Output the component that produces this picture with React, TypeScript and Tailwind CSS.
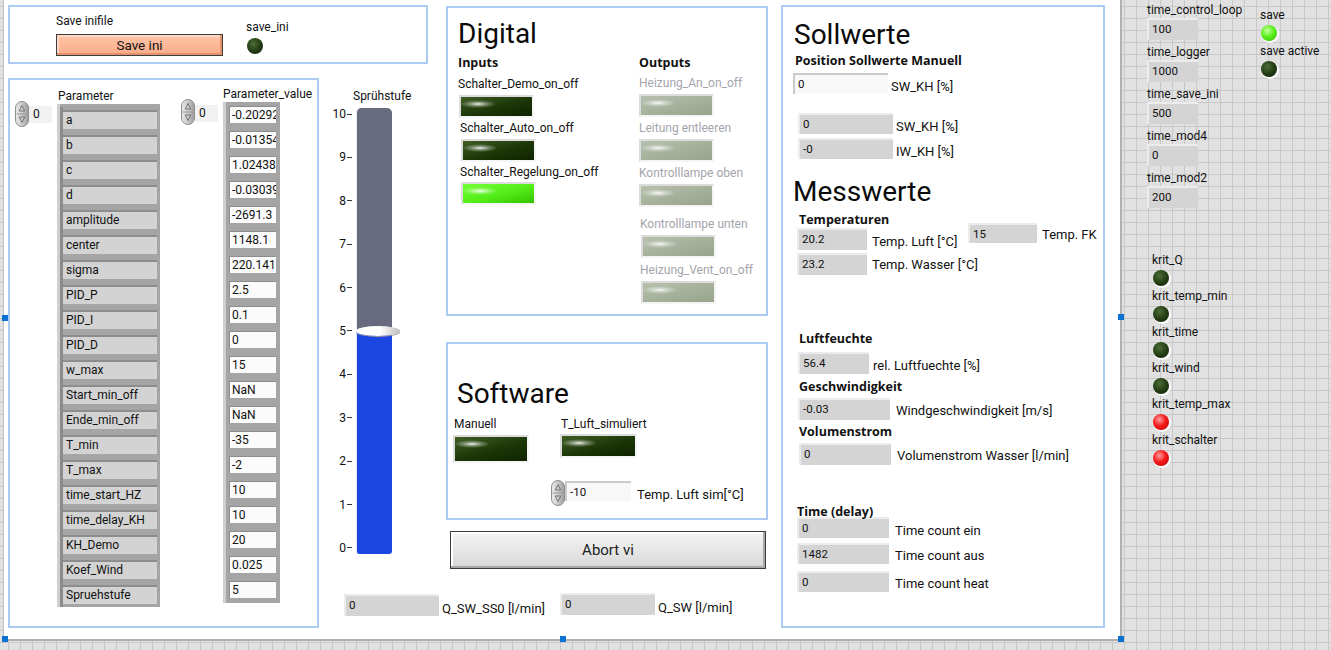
import React from 'react';

type Tone = 'dark' | 'bright' | 'gray';

const rectTone: Record<Tone, string> = {
  dark: 'bg-[image:radial-gradient(ellipse_18px_4px_at_17px_7px,rgba(255,255,255,0.9),rgba(255,255,255,0.35)_50%,rgba(255,255,255,0)),linear-gradient(165deg,#3f5e25,#1c3607_55%,#0e2300)]',
  bright:
    'bg-[image:radial-gradient(ellipse_18px_4px_at_17px_7px,rgba(255,255,255,0.9),rgba(255,255,255,0.35)_50%,rgba(255,255,255,0)),linear-gradient(165deg,#74ff36,#52ec18_55%,#36c200)]',
  gray: 'bg-[image:radial-gradient(ellipse_18px_4px_at_17px_7px,rgba(255,255,255,0.9),rgba(255,255,255,0.35)_50%,rgba(255,255,255,0)),linear-gradient(165deg,#b6c0ae,#a5b09a_55%,#97a38b)]',
};

const roundTone = {
  dark: 'bg-[image:radial-gradient(circle_at_40%_35%,#4d6d37,#203a12_55%,#112307)]',
  bright: 'bg-[image:radial-gradient(circle_at_40%_35%,#c4ff9e,#5cf01e_45%,#2fb800)]',
  red: 'bg-[image:radial-gradient(circle_at_40%_35%,#ffa0a0,#f41a1a_45%,#bf0000)]',
};

const BOLD = "font-['Open_Sans',sans-serif] text-[12.5px] font-bold leading-[16px]";
const HEAD = 'text-[28px] leading-[32px] text-[#0a0a0a]';

const RectLed = ({ tone, cls }: { tone: Tone; cls: string }) => (
  <div
    className={`${cls} shrink-0 border-2 border-t-[#dcdcdc] border-l-[#dcdcdc] border-r-[#f5f5f5] border-b-[#f5f5f5] ${rectTone[tone]}`}
  />
);

const Led = ({ tone, cls = '' }: { tone: 'dark' | 'bright' | 'red'; cls?: string }) => (
  <div className={`${cls} h-4 w-4 shrink-0 rounded-full shadow-[1px_1px_0_1px_rgba(255,255,255,0.9)] ${roundTone[tone]}`} />
);

const Spin = () => (
  <svg width="14" height="26" viewBox="0 0 14 26" className="shrink-0">
    <defs>
      <linearGradient id="spg" x1="0" y1="0" x2="1" y2="0">
        <stop offset="0" stopColor="#ececec" />
        <stop offset="0.5" stopColor="#cacaca" />
        <stop offset="1" stopColor="#9a9a9a" />
      </linearGradient>
    </defs>
    <rect x="0.5" y="0.5" width="13" height="25" rx="6.5" fill="url(#spg)" stroke="#8e8e8e" />
    <line x1="1.5" y1="13" x2="12.5" y2="13" stroke="#9a9a9a" />
    <path d="M7 4.5 L9.8 10 L4.2 10 Z" fill="none" stroke="#6e6e6e" strokeWidth="0.9" />
    <path d="M7 21.5 L9.8 16 L4.2 16 Z" fill="none" stroke="#6e6e6e" strokeWidth="0.9" />
  </svg>
);

const IndexBox = ({ boxMt }: { boxMt: string }) => (
  <div className="-mt-[3px] flex items-start">
    <Spin />
    <div className={`${boxMt} h-[17px] w-[23px] bg-[#f1f1f1] pl-[4px] text-[12px] leading-[16px]`}>0</div>
  </div>
);

const Ind = ({ v, cls, ctl }: { v: string; cls: string; ctl?: boolean }) => (
  <div
    className={`${cls} shrink-0 overflow-hidden whitespace-nowrap border-t-2 border-l-2 pl-[3px] pt-[1px] text-[11.5px] leading-[16px] ${
      ctl ? 'border-t-[#cacaca] border-l-[#cacaca] bg-[#f8f8f8]' : 'border-t-[#ececec] border-l-[#ececec] bg-[#d4d4d4]'
    }`}
  >
    {v}
  </div>
);

// label has no height of its own, so the row is exactly as tall as its box
const Row = ({ v, box, label, rowCls, lblCls, ctl }: { v: string; box: string; label: string; rowCls: string; lblCls: string; ctl?: boolean }) => (
  <div className={`flex items-start ${rowCls}`}>
    <Ind v={v} cls={box} ctl={ctl} />
    <div className={`${lblCls} h-0 whitespace-nowrap text-[13px] leading-[16px]`}>{label}</div>
  </div>
);

const params: [string, string][] = [
  ['a', '-0.20292'],
  ['b', '-0.01354'],
  ['c', '1.02438'],
  ['d', '-0.03039'],
  ['amplitude', '-2691.3'],
  ['center', '1148.1'],
  ['sigma', '220.141'],
  ['PID_P', '2.5'],
  ['PID_I', '0.1'],
  ['PID_D', '0'],
  ['w_max', '15'],
  ['Start_min_off', 'NaN'],
  ['Ende_min_off', 'NaN'],
  ['T_min', '-35'],
  ['T_max', '-2'],
  ['time_start_HZ', '10'],
  ['time_delay_KH', '10'],
  ['KH_Demo', '20'],
  ['Koef_Wind', '0.025'],
  ['Spruehstufe', '5'],
];

const inputs: { label: string; lbl: string; led: string; tone: Tone }[] = [
  { label: 'Schalter_Demo_on_off', lbl: 'mt-[5px]', led: 'mt-[3px] ml-[1px] h-[23px] w-[75px]', tone: 'dark' },
  { label: 'Schalter_Auto_on_off', lbl: 'mt-[2px] ml-[2px]', led: 'mt-[3px] ml-[3px] h-[23px] w-[75px]', tone: 'dark' },
  { label: 'Schalter_Regelung_on_off', lbl: 'mt-[2px] ml-[2px]', led: 'mt-[2px] ml-[3px] h-[23px] w-[75px]', tone: 'bright' },
];

const outputs: { label: string; lbl: string; led: string }[] = [
  { label: 'Heizung_An_on_off', lbl: 'mt-[4px]', led: 'mt-[3px] h-[23px] w-[75px]' },
  { label: 'Leitung entleeren', lbl: 'mt-[3px]', led: 'mt-[3px] h-[23px] w-[75px]' },
  { label: 'Kontrolllampe oben', lbl: 'mt-[3px]', led: 'mt-[3px] h-[23px] w-[75px]' },
  { label: 'Kontrolllampe unten', lbl: 'mt-[9px] ml-[1px]', led: 'mt-[3px] ml-[2px] h-[23px] w-[75px]' },
  { label: 'Heizung_Vent_on_off', lbl: 'mt-[4px] ml-[1px]', led: 'mt-[3px] ml-[2px] h-[23px] w-[75px]' },
];

const times: [string, string][] = [
  ['time_control_loop', '100'],
  ['time_logger', '1000'],
  ['time_save_ini', '500'],
  ['time_mod4', '0'],
  ['time_mod2', '200'],
];

const krits: [string, 'dark' | 'red'][] = [
  ['krit_Q', 'dark'],
  ['krit_temp_min', 'dark'],
  ['krit_time', 'dark'],
  ['krit_wind', 'dark'],
  ['krit_temp_max', 'red'],
  ['krit_schalter', 'red'],
];

const scale = ['10', '9', '8', '7', '6', '5', '4', '3', '2', '1', '0'];

function ParamBox() {
  return (
    <div className="flex h-[550px] w-[311px] shrink-0 items-start border-2 border-[#abcbf0] pl-[5px] pt-[8px]">
      {/* Parameter names */}
      <div className="flex flex-col">
        <div className="ml-[43px]">Parameter</div>
        <div className="flex items-start">
          <IndexBox boxMt="mt-[5px]" />
          <div className="ml-[5px] w-[103px] border-l-[3px] border-l-[#cfcfcf] bg-[#a5a5a5] pt-[3px]">
            {params.map(([name]) => (
              <div key={name} className="h-[25px] border-l-[3px] border-l-[#8b8b8b] py-[3px] pr-[3px]">
                <div className="h-[19px] overflow-hidden whitespace-nowrap border-t-2 border-t-[#8d8d8d] bg-[#d3d3d3] pl-[3px] text-[12px] leading-[16px]">
                  {name}
                </div>
              </div>
            ))}
          </div>
        </div>
      </div>
      {/* Parameter values */}
      <div className="-mt-[2px] ml-[21px] flex flex-col">
        <div className="ml-[42px]">Parameter_value</div>
        <div className="flex items-start">
          <IndexBox boxMt="mt-[6px]" />
          <div className="ml-[5px] w-[57px] border-l-[3px] border-l-[#cfcfcf] bg-[#a5a5a5] pt-[1px]">
            {params.map(([name, v]) => (
              <div key={name} className="h-[25px] pl-[3px] pt-[3px]">
                <div className="h-[17px] w-[47px] overflow-hidden whitespace-nowrap border-t border-l border-[#8d8d8d] bg-[#fbfbfb] pl-[2px] text-[12px] leading-[16px]">
                  {v}
                </div>
              </div>
            ))}
          </div>
        </div>
      </div>
    </div>
  );
}

function SliderColumn() {
  return (
    <div className="ml-[1px] flex w-[120px] shrink-0 flex-col pt-[10px]">
      <div className="ml-[33px]">Sprühstufe</div>
      <div className="mt-[3px] flex items-start">
        <div className="flex h-[448px] w-[32px] flex-col justify-between">
          {scale.map((s) => (
            <div key={s} className="flex h-[14px] items-center justify-end text-[12px] leading-[14px]">
              <span>{s}</span>
              <span className="ml-[1px] h-px w-[5px] bg-[#333]" />
            </div>
          ))}
        </div>
        <div className="relative ml-[4px] mt-[1px] flex h-[446px] w-[36px] flex-col overflow-visible">
          <div className="h-[223px] rounded-t-[5px] border-l border-l-[#e8e8f0] bg-[#686a7f]" />
          <div className="h-[223px] rounded-b-[3px] border-l border-l-[#e0e6ff] bg-[#1b46e2]" />
          <div className="absolute left-0 top-[218px] h-[10px] w-[44px] rounded-[50%] bg-[image:linear-gradient(to_right,#ffffff_55%,#bdbdbd)] shadow-[0_1px_0_#9a9a9a]" />
        </div>
      </div>
      <div className="ml-[24px] mt-[39px] flex items-start whitespace-nowrap">
        <Ind v="0" cls="h-[22px] w-[95px]" />
        <div className="ml-[3px] mt-[7px] text-[13px] leading-[16px]">Q_SW_SS0 [l/min]</div>
      </div>
    </div>
  );
}

function DigitalBox() {
  return (
    <div className="h-[310px] w-[322px] shrink-0 border-2 border-[#abcbf0] pl-[10px] pt-[10px]">
      <div className={HEAD}>Digital</div>
      <div className="mt-[5px] flex items-start">
        <div className="flex w-[181px] shrink-0 flex-col items-start">
          <div className={BOLD}>Inputs</div>
          {inputs.map((it) => (
            <React.Fragment key={it.label}>
              <div className={`${it.lbl} whitespace-nowrap`}>{it.label}</div>
              <RectLed tone={it.tone} cls={it.led} />
            </React.Fragment>
          ))}
        </div>
        <div className="flex flex-col items-start">
          <div className={BOLD}>Outputs</div>
          {outputs.map((it) => (
            <React.Fragment key={it.label}>
              <div className={`${it.lbl} whitespace-nowrap text-[#a4a4ac]`}>{it.label}</div>
              <RectLed tone="gray" cls={it.led} />
            </React.Fragment>
          ))}
        </div>
      </div>
    </div>
  );
}

function SoftwareBox() {
  return (
    <div className="mt-[26px] h-[178px] w-[322px] shrink-0 border-2 border-[#abcbf0] pl-[9px] pt-[34px]">
      <div className={HEAD}>Software</div>
      <div className="mt-[6px] flex items-start">
        <div className="-ml-[3px] flex w-[107px] shrink-0 flex-col items-start">
          <div>Manuell</div>
          <RectLed tone="dark" cls="mt-[3px] -ml-[1px] h-[28px] w-[76px]" />
        </div>
        <div className="flex flex-col items-start">
          <div>T_Luft_simuliert</div>
          <RectLed tone="dark" cls="mt-[2px] -ml-[1px] h-[24px] w-[77px]" />
        </div>
      </div>
      <div className="ml-[94px] mt-[17px] flex items-start">
        <Spin />
        <Ind v="-10" cls="mt-[1px] h-[20px] w-[66px]" ctl />
        <div className="ml-[6px] mt-[7px] whitespace-nowrap text-[13px] leading-[16px]">Temp. Luft sim[°C]</div>
      </div>
    </div>
  );
}

function SollBox() {
  return (
    <div className="ml-[13px] flex h-[623px] w-[324px] shrink-0 flex-col border-2 border-[#abcbf0] pl-[10px] pt-[12px]">
      <div className={`${HEAD} ml-[1px]`}>Sollwerte</div>
      <div className={`${BOLD} ml-[2px] mt-[2px]`}>Position Sollwerte Manuell</div>
      <Row v="0" box="h-[21px] w-[95px]" label="SW_KH [%]" rowCls="mt-[4px]" lblCls="ml-[3px] mt-[6px]" ctl />
      <Row v="0" box="h-[21px] w-[95px]" label="SW_KH [%]" rowCls="mt-[19px] ml-[5px]" lblCls="ml-[3px] mt-[6px]" />
      <Row v="-0" box="h-[21px] w-[95px]" label="IW_KH [%]" rowCls="mt-[4px] ml-[5px]" lblCls="ml-[3px] mt-[6px]" />
      <div className={`${HEAD} mt-[17px]`}>Messwerte</div>
      <div className={`${BOLD} ml-[6px] mt-[4px]`}>Temperaturen</div>
      <div className="flex items-start">
        <div className="ml-[4px] flex w-[171px] shrink-0 flex-col">
          <Row v="20.2" box="h-[22px] w-[70px]" label="Temp. Luft [°C]" rowCls="" lblCls="ml-[5px] mt-[6px]" />
          <Row v="23.2" box="h-[22px] w-[70px]" label="Temp. Wasser [°C]" rowCls="mt-[3px]" lblCls="ml-[5px] mt-[4px]" />
        </div>
        <Row v="15" box="h-[20px] w-[69px]" label="Temp. FK" rowCls="-mt-[5px]" lblCls="ml-[5px] mt-[4px]" />
      </div>
      <div className={`${BOLD} ml-[6px] mt-[56px]`}>Luftfeuchte</div>
      <Row v="56.4" box="h-[22px] w-[71px]" label="rel. Luftfuechte [%]" rowCls="mt-[5px] ml-[5px]" lblCls="ml-[4px] mt-[6px]" />
      <div className={`${BOLD} ml-[6px] mt-[5px]`}>Geschwindigkeit</div>
      <Row v="-0.03" box="h-[22px] w-[92px]" label="Windgeschwindigkeit [m/s]" rowCls="mt-[3px] ml-[5px]" lblCls="ml-[6px] mt-[5px]" />
      <div className={`${BOLD} ml-[6px] mt-[4px]`}>Volumenstrom</div>
      <Row v="0" box="h-[22px] w-[92px]" label="Volumenstrom Wasser [l/min]" rowCls="mt-[3px] ml-[6px]" lblCls="ml-[6px] mt-[5px]" />
      <div className={`${BOLD} relative z-10 ml-[4px] mt-[39px]`}>Time (delay)</div>
      <Row v="0" box="h-[21px] w-[92px]" label="Time count ein" rowCls="-mt-[3px] ml-[4px]" lblCls="ml-[6px] mt-[6px]" />
      <Row v="1482" box="h-[21px] w-[92px]" label="Time count aus" rowCls="mt-[5px] ml-[4px]" lblCls="ml-[6px] mt-[5px]" />
      <Row v="0" box="h-[21px] w-[92px]" label="Time count heat" rowCls="mt-[7px] ml-[4px]" lblCls="ml-[6px] mt-[5px]" />
    </div>
  );
}

function RightColumn() {
  return (
    <div className="flex shrink-0 flex-col pl-[25px]">
      <div className="flex items-start">
        <div className="flex w-[113px] shrink-0 flex-col items-start pt-[2px]">
          {times.map(([name, v], i) => (
            <React.Fragment key={name}>
              <div className={i === 0 ? '' : 'mt-[4px]'}>{name}</div>
              <Ind v={v} cls="h-[22px] w-[51px]" />
            </React.Fragment>
          ))}
        </div>
        <div className="flex flex-col items-start pt-[7px]">
          <div>save</div>
          <Led tone="bright" cls="ml-[1px] mt-[2px]" />
          <div className="mt-[2px]">save active</div>
          <Led tone="dark" cls="ml-[1px] mt-[2px]" />
        </div>
      </div>
      <div className="ml-[5px] mt-[44px] flex flex-col items-start">
        {krits.map(([name, tone], i) => (
          <React.Fragment key={name}>
            <div className={i === 0 ? '' : 'mt-[2px]'}>{name}</div>
            <Led tone={tone} cls="ml-[1px] mt-[2px]" />
          </React.Fragment>
        ))}
      </div>
    </div>
  );
}

export default function App() {
  return (
    <div className="relative flex h-[650px] w-[1331px] overflow-hidden bg-[#e1e1e1] bg-[image:linear-gradient(to_right,#c8c8c8_1px,transparent_1px),linear-gradient(to_bottom,#c8c8c8_1px,transparent_1px)] bg-size-[12px_12px] bg-position-[8px_6px] font-['Roboto',sans-serif] text-[12px] leading-[16px] text-[#111]">
      <div className="w-[3px] shrink-0" />
      <div className="flex h-[641px] w-[1119px] shrink-0 border-l border-r-2 border-b-2 border-l-[#c0c0c0] border-r-[#b0b0b0] border-b-[#b0b0b0] bg-white pl-[4px] pt-[5px]">
        <div className="flex w-[432px] shrink-0 flex-col">
          <div className="flex h-[59px] w-[420px] border-2 border-[#abcbf0] pl-[46px]">
            <div className="flex flex-col items-start pt-[6px]">
              <div>Save inifile</div>
              <div className="mt-[5px] flex h-[22px] w-[167px] items-center justify-center border border-[#3d3d3d] bg-[image:linear-gradient(to_bottom,#ffc5a8,#fbac88)] text-[13.5px] shadow-[inset_-2px_-2px_0_#e2916c,inset_2px_2px_0_#ffd8c4]">
                Save ini
              </div>
            </div>
            <div className="ml-[23px] flex flex-col items-start pt-[12px]">
              <div>save_ini</div>
              <Led tone="dark" cls="ml-[1px] mt-[3px]" />
            </div>
          </div>
          <div className="mt-[14px] flex items-start">
            <ParamBox />
            <SliderColumn />
          </div>
        </div>
        <div className="ml-[6px] flex w-[322px] shrink-0 flex-col pt-[1px]">
          <DigitalBox />
          <SoftwareBox />
          <div className="ml-[4px] mt-[11px] flex h-[38px] w-[316px] items-center justify-center border border-[#3d3d3d] bg-[image:linear-gradient(to_bottom,#f5f5f5,#d8d8d8)] text-[15px] text-[#222] shadow-[inset_-2px_-2px_0_#a8a8a8,inset_2px_2px_0_#ffffff]">
            Abort vi
          </div>
          <div className="ml-[114px] mt-[24px] flex items-start whitespace-nowrap">
            <Ind v="0" cls="h-[22px] w-[95px]" />
            <div className="ml-[3px] mt-[7px] text-[13px] leading-[16px]">Q_SW [l/min]</div>
          </div>
        </div>
        <SollBox />
      </div>
      <RightColumn />
      <div className="absolute left-[2px] top-[315px] h-[6px] w-[6px] bg-[#0a70d2]" />
      <div className="absolute left-[1118px] top-[314px] h-[6px] w-[6px] bg-[#0a70d2]" />
      <div className="absolute left-[2px] top-[636px] h-[6px] w-[6px] bg-[#0a70d2]" />
      <div className="absolute left-[560px] top-[636px] h-[6px] w-[6px] bg-[#0a70d2]" />
      <div className="absolute left-[1118px] top-[636px] h-[6px] w-[6px] bg-[#0a70d2]" />
    </div>
  );
}
